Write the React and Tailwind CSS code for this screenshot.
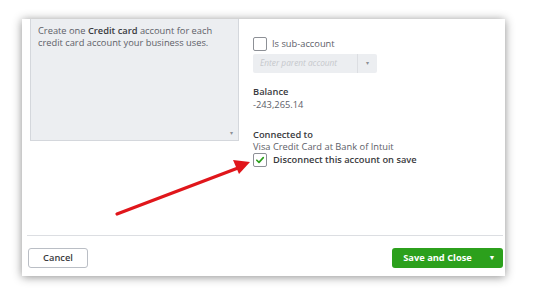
import React from 'react'

const font = { fontFamily: '"Open Sans", "Liberation Sans", sans-serif' }

function Check({ checked }) {
  return (
    <span className="flex h-[14px] w-[14px] shrink-0 items-center justify-center rounded-[2px] border border-[#8d9096] bg-white">
      {checked && (
        <svg width="10" height="10" viewBox="0 0 10 10">
          <path d="M1.8 5.2 L4 7.4 L8.3 2.6" fill="none" stroke="#2ca01c" strokeWidth="1.6" strokeLinecap="round" strokeLinejoin="round" />
        </svg>
      )}
    </span>
  )
}

export default function App() {
  return (
    <div className="relative h-[301px] w-[534px] overflow-hidden bg-white" style={font}>
      <div className="ml-[22px] mt-[19px] flex h-[257px] w-[483px] flex-col bg-white shadow-[0_1px_9px_rgba(0,0,0,0.45)]">
        {/* body */}
        <div className="flex flex-1">
          <div className="ml-[8px] relative h-[122px] w-[209px] border border-t-0 border-[#d4d7dc] bg-[#eceef1] px-[7px] pt-[6px] text-[9.3px] leading-[11.5px] text-[#5d6068]">
            Create one <b className="font-semibold text-[#393a3d]">Credit card</b> account for each credit card account your business uses.
            <span className="absolute bottom-[4px] right-[5px] text-[6px] leading-none text-[#8d9096]">▾</span>
          </div>

          <div className="ml-[14px] flex flex-col pt-[18px] text-[9.3px] text-[#5d6068]">
            <div className="flex items-center gap-[5px]">
              <Check />
              <span>Is sub-account</span>
            </div>
            <div className="mt-[3px] flex h-[19px] w-[124px] items-center rounded-[2px] bg-[#eceef1]">
              <span className="flex-1 pl-[7px] text-[8.3px] italic text-[#c6c8cc]">Enter parent account</span>
              <span className="flex h-full w-[20px] items-center justify-center border-l border-[#dcdee2] text-[6px] text-[#8d9096]">▾</span>
            </div>

            <div className="mt-[12px] font-semibold leading-[13px] text-[#393a3d]">Balance</div>
            <div className="leading-[13px]">-243,265.14</div>

            <div className="mt-[18px] font-semibold leading-[12px] text-[#393a3d]">Connected to</div>
            <div className="leading-[11px]">Visa Credit Card at Bank of Intuit</div>
            <div className="mt-[1px] flex items-center gap-[6px]">
              <Check checked />
              <span className="font-semibold text-[#393a3d]">Disconnect this account on save</span>
            </div>
          </div>
        </div>

        {/* footer */}
        <div className="ml-[5px] mr-[2px] border-t border-[#dcdee2]" />
        <div className="flex items-center justify-between pl-[6px] pr-[2px] pt-[12px] pb-[8px]">
          <button className="h-[20px] w-[60px] rounded-[3px] border border-[#babec5] bg-white text-[9.3px] font-semibold text-[#393a3d]">
            Cancel
          </button>
          <button className="flex h-[20px] w-[111px] items-center rounded-[3px] bg-[#2ca01c] text-[9.3px] font-bold text-white">
            <span className="flex-1 pl-[2px] text-center">Save and Close</span>
            <span className="w-[22px] text-center text-[7px]">▼</span>
          </button>
        </div>
      </div>

      {/* annotation arrow */}
      <svg className="absolute left-0 top-0" width="534" height="301" viewBox="0 0 534 301">
        <line x1="117" y1="214" x2="238" y2="168" stroke="#e0161b" strokeWidth="3.2" strokeLinecap="round" />
        <polygon points="250,162 233,160 239,174" fill="#e0161b" />
      </svg>
    </div>
  )
}
